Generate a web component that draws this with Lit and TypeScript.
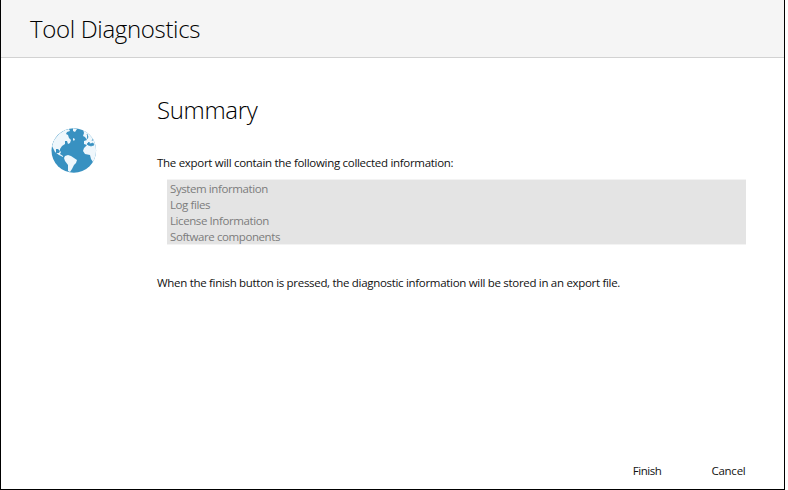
import { LitElement, html, css } from "lit";
import { customElement, state } from "lit/decorators.js";

@customElement("globe-icon")
class GlobeIcon extends LitElement {
  static styles = css`
    :host { display: block; width: 46px; height: 46px; }
    .globe { display: block; }
  `;
  render() {
    return html`<svg class="globe" width="46" height="46" viewBox="0 0 46 46">
      <defs><clipPath id="disc"><circle cx="22.8" cy="22.5" r="22.3" /></clipPath></defs>
      <circle cx="22.8" cy="22.5" r="22.3" fill="#3891c1" />
      <g clip-path="url(#disc)" fill="#eff7fc">
        <path d="M1 18 3 12 8 6 14 2 18 1 19 3 16 4 15 6 17 7 18 10 20 12 19 15 17 16 16 13 14 13 14 16 11 18 9 21 9 23 7 21 5 21 5 25 8 25 9 23 10 24 9 26 12 28 12 29 8 27 4 24 2 20Z" />
        <path d="M14 28 17 27 20 28 23 30 26 32 25 35 23 37 21 41 19 44 17 43 17 37 14 33 13 30Z" />
        <path d="M22 0 26 1 24 4 22 3ZM22 10 24 11 23 13 22 12Z" />
        <path d="M32 1 38 3 46 12 46 30 42 34 40 31 39 27 34 26 32 23 33 20 36 17 33 16 33 13 36 12 34 9 32 8 33 5Z" />
      </g>
      <path d="M36 16 38 14 39 16 42 15 43 17 40 18 37 17ZM36 6 37 9 36 11M42 11 41 13" fill="#3891c1" stroke="#3891c1" stroke-width=".7" />
    </svg>`;
  }
}

@customElement("app-root")
class AppRoot extends LitElement {
  @state() items = ["System information", "Log files", "License Information", "Software components"];

  static styles = css`
    :host { display: block; width: 788px; height: 490px; background: #fff; font-family: "Open Sans", "Noto Sans", sans-serif; font-size: 11.5px; line-height: 16px; letter-spacing: -0.295px; color: #111; }
    * { box-sizing: border-box; }
    .window { display: flex; flex-direction: column; width: 785px; height: 490px; border: 1px solid #000; border-top: 0; background: #fff; }
    .header { height: 58px; flex: none; background: #f5f5f5; border-bottom: 1px solid #d2d2d2; padding: 11px 0 0 29px; }
    h1, h2, p, ul { margin: 0; padding: 0; font-weight: 400; white-space: nowrap; }
    h1, h2 { font-size: 24px; line-height: 36px; font-weight: 300; letter-spacing: -0.33px; color: #000; }
    .body { flex: 1; display: grid; grid-template-columns: 106px 589px; padding: 34px 0 0 50px; }
    .aside { padding-top: 36px; }
    .intro { padding-top: 27px; }
    .list { list-style: none; margin: 8px 0 0 10px; width: 579px; height: 66px; padding: 1px 3px; background: #e4e4e4; border: solid #f3f3f3; border-width: 1px 0; color: #7c7c7c; letter-spacing: -0.41px; }
    .item { height: 15.9px; line-height: 16px; }
    .note { padding-top: 30px; letter-spacing: -0.308px; }
    .footer { display: flex; justify-content: flex-end; gap: 50px; padding: 0 38.5px 10px 0; }
    .action { all: unset; white-space: nowrap; }
    .finish { letter-spacing: -0.45px; }
    .cancel { letter-spacing: -0.25px; }
  `;

  render() {
    return html`<div class="window">
      <header class="header"><h1>Tool Diagnostics</h1></header>
      <main class="body">
        <div class="aside"><globe-icon></globe-icon></div>
        <section>
          <h2>Summary</h2>
          <p class="intro">The export will contain the following collected information:</p>
          <ul class="list">${this.items.map((item) => html`<li class="item">${item}</li>`)}</ul>
          <p class="note">When the finish button is pressed, the diagnostic information will be stored in an export file.</p>
        </section>
      </main>
      <footer class="footer"><button class="action finish">Finish</button><button class="action cancel">Cancel</button></footer>
    </div>`;
  }
}
